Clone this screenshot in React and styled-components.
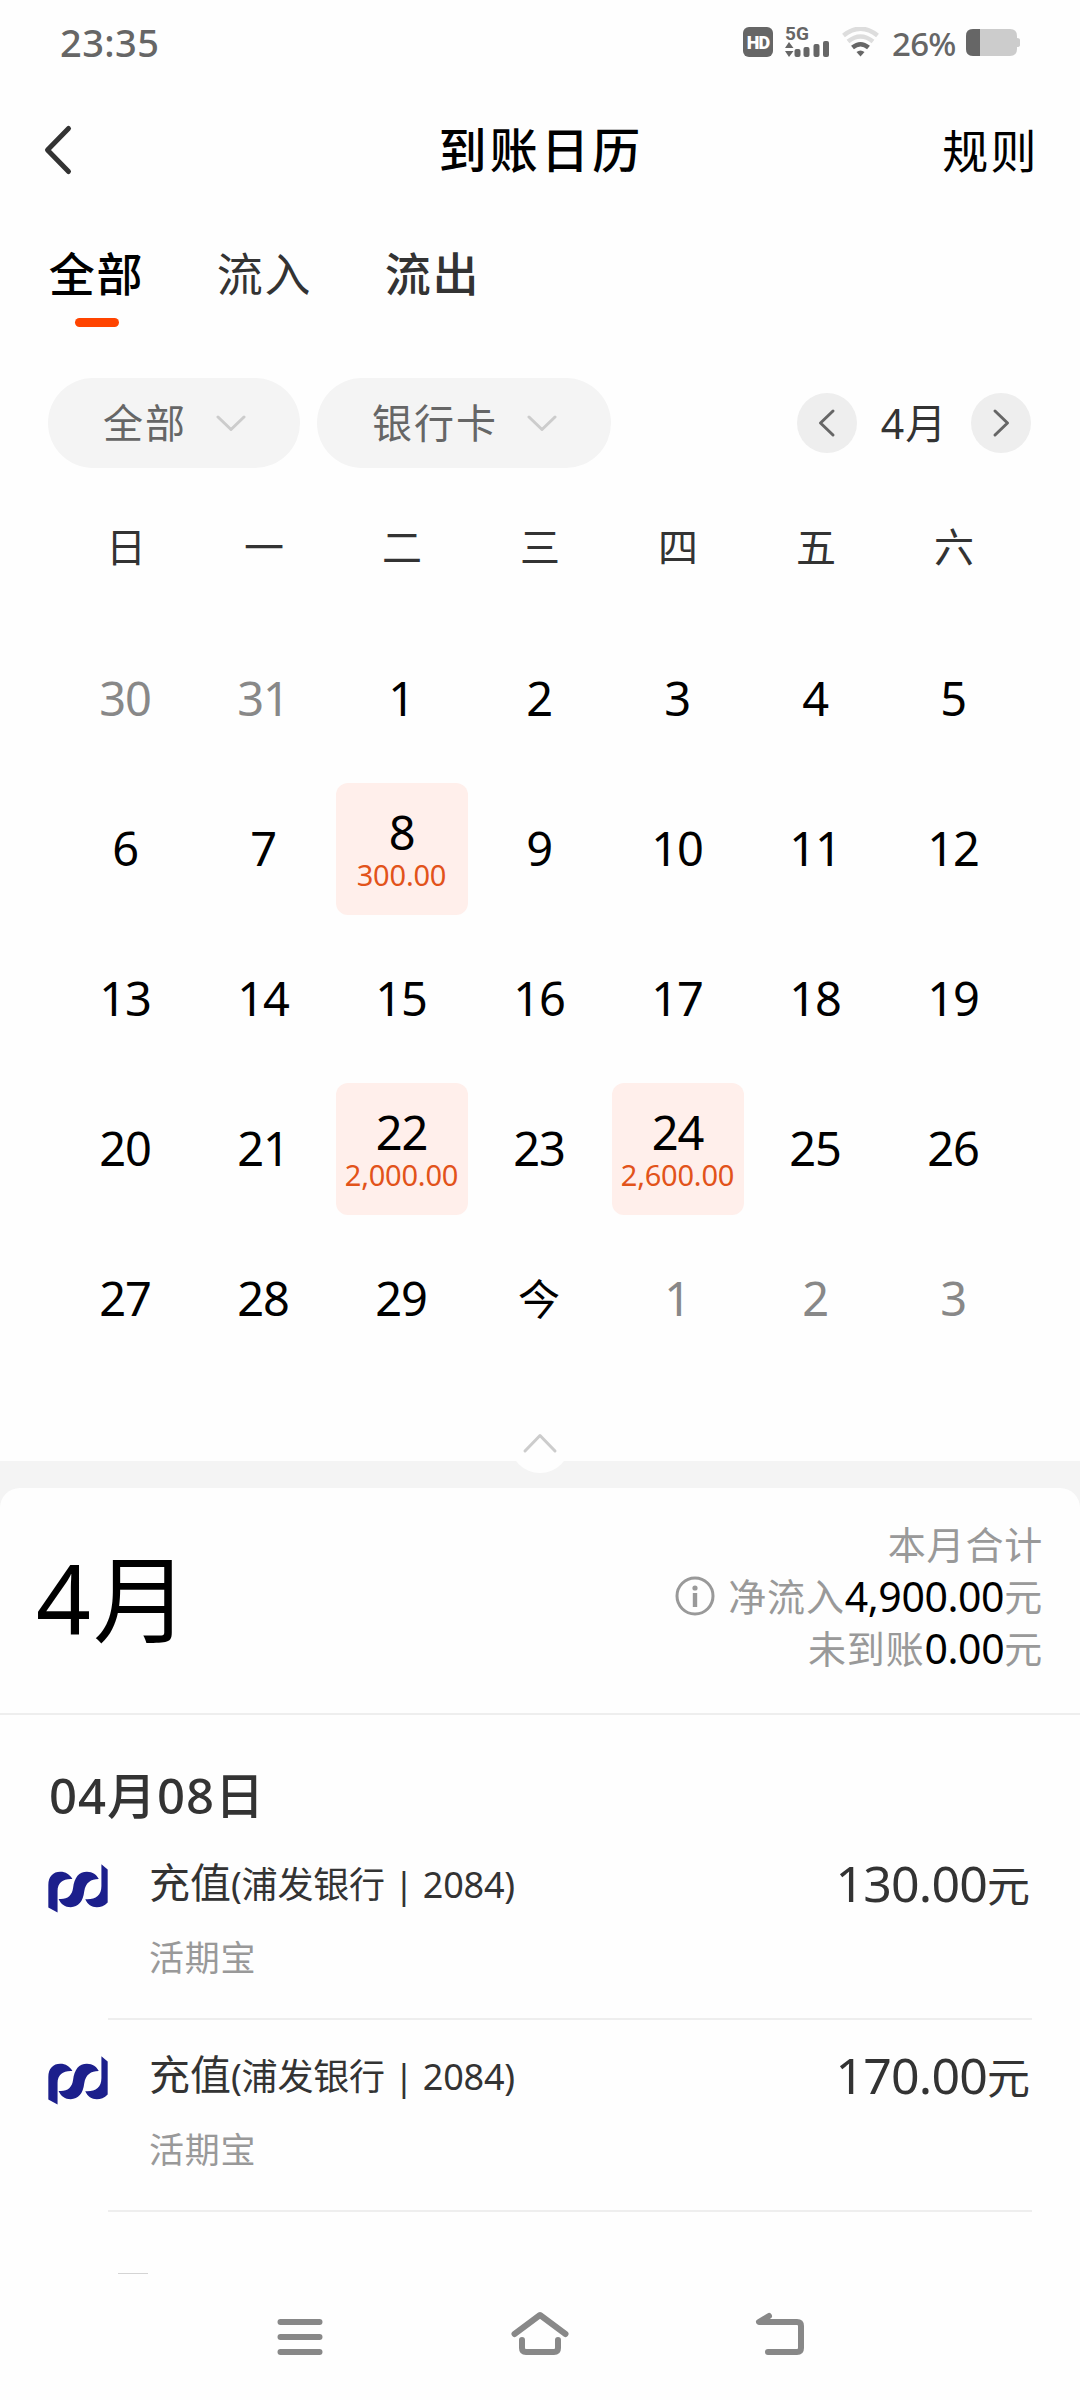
import { useState } from "react";
import styled, { createGlobalStyle } from "styled-components";

const GlobalStyle = createGlobalStyle`
  * {
    box-sizing: border-box;
  }
  body {
    margin: 0;
    background: #fefefe;
    font-family: "Noto Sans", "Noto Sans CJK SC", sans-serif;
    color: #000;
  }
`;

const Page = styled.div`
  display: flex;
  flex-direction: column;
  width: 1080px;
  height: 2400px;
  overflow: hidden;
  background: #fefefe;
  white-space: nowrap;
`;

const StatusBar = styled.div`
  display: flex;
  align-items: center;
  height: 84px;
  padding: 0 60px;
  color: #666;
`;

const Time = styled.div`
  flex: 1;
  font-size: 38px;
  line-height: 82px;
  font-weight: 500;
  letter-spacing: 0.4px;
`;

const HdBadge = styled.div`
  width: 30px;
  height: 30px;
  margin-right: 12px;
  border-radius: 6px;
  background: #666;
  color: #fff;
  font: 900 18px/31px Roboto, sans-serif;
  letter-spacing: -0.8px;
  text-align: center;
`;

const Signal = styled.div`
  display: flex;
  flex-direction: column;
  width: 45px;
  height: 30px;
  margin-right: 12px;
`;

const Network = styled.div`
  height: 14px;
  font: 700 19px/14px Roboto, sans-serif;
`;

const Percent = styled.div`
  margin: 4px 9px 0 13px;
  width: 65px;
  font-size: 33px;
  line-height: 40px;
  font-weight: 500;
  letter-spacing: -0.7px;
`;

const Header = styled.header`
  display: grid;
  grid-template-columns: 1fr auto 1fr;
  align-items: center;
  height: 132px;
  padding: 0 41px 0 43px;
`;

const Title = styled.h1`
  margin: 0;
  font-size: 48px;
  line-height: 60px;
  font-weight: 500;
  letter-spacing: 3.2px;
`;

const Rules = styled.div`
  justify-self: end;
  font-size: 46px;
  line-height: 60px;
  letter-spacing: 2.4px;
`;

const Tabs = styled.nav`
  display: flex;
  gap: 74px;
  height: 162px;
  padding: 27px 0 0 49px;
`;

const Tab = styled.div`
  display: flex;
  flex-direction: column;
  align-items: center;
  width: 94px;
  padding-left: 1px;
  color: ${({ $active }) => ($active ? "#000" : "#333")};
  font-size: 46px;
  line-height: 60px;
  font-weight: ${({ $strong }) => ($strong ? 500 : 400)};
  letter-spacing: 1.8px;
  cursor: pointer;

  &::after {
    content: "";
    width: 44px;
    height: 9px;
    margin-top: 15px;
    border-radius: 5px;
    background: ${({ $active }) => ($active ? "#ff4400" : "transparent")};
  }
`;

const Filters = styled.div`
  display: flex;
  align-items: center;
  height: 90px;
  padding: 0 49px 0 48px;
`;

const Pill = styled.div`
  display: flex;
  align-items: center;
  gap: 29px;
  height: 90px;
  margin-right: 17px;
  padding: 0 54px 0 55px;
  border-radius: 45px;
  background: #f4f4f4;
  color: #666;
  font-size: 40px;
  line-height: 60px;
  letter-spacing: 2px;
`;

const MonthNav = styled.div`
  display: flex;
  align-items: center;
  justify-content: space-between;
  width: 234px;
  margin-left: auto;
  color: #333;
  font-size: 41px;
  line-height: 60px;
  letter-spacing: 1px;
`;

const RoundButton = styled.div`
  display: flex;
  align-items: center;
  justify-content: center;
  width: 60px;
  height: 60px;
  border-radius: 50%;
  background: #eee;
`;

const Week = styled.div`
  display: grid;
  grid-template-columns: repeat(7, 138px);
  justify-content: center;
  height: 156px;
  padding-top: 49px;
  color: #333;
  font-size: 40px;
  line-height: 60px;
  text-align: center;
`;

const Days = styled.div`
  display: grid;
  grid-template-columns: repeat(7, 138px);
  grid-auto-rows: 150px;
  place-content: start center;
  place-items: center;
  height: 837px;
`;

const Day = styled.div`
  display: flex;
  flex-direction: column;
  align-items: center;
  justify-content: center;
  width: 132px;
  height: 132px;
  padding: ${({ $marked }) => ($marked ? "3px 1px 0 0" : "0 2px 1px 0")};
  border-radius: 12px;
  background: ${({ $marked }) => ($marked ? "#ffefeb" : "transparent")};
  color: ${({ $muted }) => ($muted ? "#888" : "#000")};
  font-size: ${({ $today }) => ($today ? 42 : 47)}px;
  line-height: 47px;
  letter-spacing: ${({ $today }) => ($today ? 0 : -1.2)}px;
`;

const Amount = styled.div`
  color: #e2531a;
  font-size: 29px;
  line-height: 37px;
  letter-spacing: -0.2px;
`;

const Band = styled.div`
  display: flex;
  justify-content: center;
  height: 48px;
  margin-bottom: -21px;
  background: #f4f4f4;
`;

const Collapse = styled.div`
  display: flex;
  align-items: center;
  justify-content: center;
  width: 60px;
  height: 60px;
  margin-top: -48px;
  border-radius: 50%;
  background: #fefefe;
`;

const Summary = styled.section`
  display: flex;
  align-items: center;
  justify-content: space-between;
  height: 227px;
  padding: 0 37px 0 36px;
  border-bottom: 2px solid #eee;
  border-radius: 20px 20px 0 0;
  background: #fefefe;
`;

const Month = styled.div`
  font-size: 96px;
  line-height: 120px;
  margin-top: -6px;
  letter-spacing: 2px;
`;

const Totals = styled.div`
  margin-top: -9px;
  color: #999;
  font-size: 38px;
  line-height: 52px;
  letter-spacing: 0.8px;
`;

const TotalLine = styled.div`
  display: flex;
  align-items: center;
  justify-content: flex-end;
  height: 52px;

  svg {
    margin-right: 13px;
  }
  b {
    color: #000;
    font-size: 41px;
    font-weight: 400;
    letter-spacing: -0.4px;
  }
`;

const DateTitle = styled.h2`
  margin: 50px 0 0 49px;
  color: #333;
  font-size: 49px;
  line-height: 60px;
  font-weight: 500;
  letter-spacing: 1px;
`;

const Record = styled.article`
  display: grid;
  grid-template-columns: 60px 43px 1fr auto;
  height: 192px;
  margin: 0 48px;
`;

const LogoCell = styled.div`
  padding-top: 36px;
`;

const RecordBody = styled.div`
  grid-column: 2 / -1;
  display: flex;
  justify-content: space-between;
  padding: 24px 2px 0 41px;
  border-bottom: 2px solid #eee;
`;

const RecordName = styled.div`
  color: #333;
  font-size: 41px;
  line-height: 60px;

  small {
    font-size: 36px;
    letter-spacing: -0.2px;
  }
`;

const Product = styled.div`
  margin-top: 13px;
  color: #999;
  font-size: 35px;
  line-height: 60px;
  letter-spacing: 0.8px;
`;

const Money = styled.div`
  color: #333;
  font-size: 50px;
  line-height: 62px;
  letter-spacing: -0.8px;

  span {
    font-size: 43px;
    letter-spacing: 0;
  }
`;

const Records = styled.div`
  flex: 1;
  margin-top: 3px;
  overflow: hidden;
`;

const NextLogoEdge = styled.div`
  width: 30px;
  height: 1px;
  margin: 61px 0 0 118px;
  background: #d4d4d4;
`;

const SystemNav = styled.footer`
  display: flex;
  justify-content: space-between;
  align-items: center;
  height: 126px;
  padding: 0 270px;
`;

function Chevron({ d, width, height, color, stroke = 3 }) {
  return (
    <svg width={width} height={height} viewBox={`0 0 ${width} ${height}`}>
      <path
        d={d}
        fill="none"
        stroke={color}
        strokeWidth={stroke}
        strokeLinecap="round"
        strokeLinejoin="round"
      />
    </svg>
  );
}

const Down = () => (
  <Chevron width={30} height={18} color="#ccc" d="M2 3L15 15.500L28 3" />
);

function SignalBars() {
  return (
    <svg width="45" height="16" viewBox="0 0 45 16" fill="#666">
      <path d="M4 1L8.500 7H0Z M0 10H8.500L4 16Z" />
      <rect x="9.500" y="8" width="6" height="8" rx="2" />
      <rect x="18.500" y="6" width="6" height="10" rx="2" />
      <rect x="28.500" y="3" width="6" height="13" rx="2" />
      <rect x="38" y="0" width="6" height="16" rx="2" />
    </svg>
  );
}

function Wifi() {
  return (
    <svg width="37" height="30" viewBox="0 0 37 30" fill="none">
      <path d="M1.500 8.500Q18.500 -5 35.500 8.500" stroke="#ddd" strokeWidth="4.500" />
      <path d="M6 14.500Q18.500 4.500 31 14.500" stroke="#ddd" strokeWidth="4.500" />
      <path d="M10.500 20.500Q18.500 14 26.500 20.500" stroke="#666" strokeWidth="4.500" />
      <path d="M14.500 25Q18.500 22 22.500 25L18.500 29.500Z" fill="#666" />
    </svg>
  );
}

function Battery() {
  return (
    <svg width="54" height="27" viewBox="0 0 54 27">
      <path
        d="M7 0H44Q51 0 51 7V9Q54 9 54 11V16Q54 18 51 18V20Q51 27 44 27H7Q0 27 0 20V7Q0 0 7 0Z"
        fill="#ccc"
      />
      <path d="M7 0H14V27H7Q0 27 0 20V7Q0 0 7 0Z" fill="#666" />
    </svg>
  );
}

function BankLogo() {
  return (
    <svg width="60" height="49" viewBox="54 76 182 147" fill="#1c1f8c">
      <path d="M55 207V139C55 113 70 99 91 99C108 99 120 107 128 121C101 119 83 132 83 157V222Z" />
      <path d="M172 99C190 99 201 108 208 121C184 121 168 132 164 158C160 190 146 206 123 206C106 206 93 197 86 181C111 184 127 172 130 148C134 116 148 99 172 99Z" />
      <path d="M216 76L235 92V192C225 203 214 206 202 206C186 206 174 198 167 182C197 184 216 172 216 142Z" />
    </svg>
  );
}

function Info() {
  return (
    <svg width="40" height="40" viewBox="0 0 40 40" fill="#999">
      <circle cx="20" cy="20" r="18" fill="none" stroke="#999" strokeWidth="3" />
      <circle cx="20" cy="12" r="2.600" />
      <rect x="17.800" y="17" width="4.400" height="14" />
    </svg>
  );
}

const NavIcon = styled.svg.attrs({
  width: 60,
  height: 60,
  fill: "none",
  stroke: "#888",
  strokeWidth: 6,
  strokeLinecap: "round",
  strokeLinejoin: "round",
})``;

const week = ["日", "一", "二", "三", "四", "五", "六"];

const amounts = { 8: "300.00", 22: "2,000.00", 24: "2,600.00" };

const days = [
  { label: "30", muted: true },
  { label: "31", muted: true },
  ...Array.from({ length: 29 }, (_, i) => ({
    label: String(i + 1),
    amount: amounts[i + 1],
  })),
  { label: "今", today: true },
  { label: "1", muted: true },
  { label: "2", muted: true },
  { label: "3", muted: true },
];

const tabs = [
  { label: "全部", strong: true },
  { label: "流入", strong: false },
  { label: "流出", strong: true },
];

const records = [
  { id: 1, amount: "130.00" },
  { id: 2, amount: "170.00" },
];

export default function App() {
  const [tab, setTab] = useState("全部");

  return (
    <Page>
      <GlobalStyle />
      <StatusBar>
        <Time>23:35</Time>
        <HdBadge>HD</HdBadge>
        <Signal>
          <Network>5G</Network>
          <SignalBars />
        </Signal>
        <Wifi />
        <Percent>26%</Percent>
        <Battery />
      </StatusBar>
      <Header>
        <Chevron
          width={30}
          height={54}
          color="#333"
          stroke={5}
          d="M25.500 5.500L4.500 27L25.500 48.500"
        />
        <Title>到账日历</Title>
        <Rules>规则</Rules>
      </Header>
      <Tabs>
        {tabs.map(({ label, strong }) => (
          <Tab
            key={label}
            $active={tab === label}
            $strong={strong}
            onClick={() => setTab(label)}
          >
            {label}
          </Tab>
        ))}
      </Tabs>
      <Filters>
        <Pill>
          全部
          <Down />
        </Pill>
        <Pill>
          银行卡
          <Down />
        </Pill>
        <MonthNav>
          <RoundButton>
            <Chevron width={18} height={30} color="#666" d="M15 3L2.500 15L15 27" />
          </RoundButton>
          4月
          <RoundButton>
            <Chevron width={18} height={30} color="#666" d="M3 3L15.500 15L3 27" />
          </RoundButton>
        </MonthNav>
      </Filters>
      <Week>
        {week.map((name) => (
          <div key={name}>{name}</div>
        ))}
      </Week>
      <Days>
        {days.map((day, i) => (
          <Day
            key={i}
            $marked={Boolean(day.amount)}
            $muted={day.muted}
            $today={day.today}
          >
            {day.label}
            {day.amount && <Amount>{day.amount}</Amount>}
          </Day>
        ))}
      </Days>
      <div>
        <Band>
          <Collapse>
            <Chevron width={36} height={22} color="#ccc" d="M3 19L18 3.500L33 19" />
          </Collapse>
        </Band>
        <Summary>
          <Month>4月</Month>
          <Totals>
            <TotalLine>本月合计</TotalLine>
            <TotalLine>
              <Info />
              净流入<b>4,900.00</b>元
            </TotalLine>
            <TotalLine>
              未到账<b>0.00</b>元
            </TotalLine>
          </Totals>
        </Summary>
      </div>
      <DateTitle>04月08日</DateTitle>
      <Records>
        {records.map((record) => (
          <Record key={record.id}>
            <LogoCell>
              <BankLogo />
            </LogoCell>
            <RecordBody>
              <div>
                <RecordName>
                  充值<small>(浦发银行 | 2084)</small>
                </RecordName>
                <Product>活期宝</Product>
              </div>
              <Money>
                {record.amount}
                <span>元</span>
              </Money>
            </RecordBody>
          </Record>
        ))}
        <NextLogoEdge />
      </Records>
      <SystemNav>
        <NavIcon viewBox="270 2307 60 60">
          <path d="M280.500 2322H319.500M280.500 2337H319.500M280.500 2352H319.500" />
        </NavIcon>
        <NavIcon viewBox="510 2307 60 60">
          <path d="M514.500 2334L540 2315L565.500 2334" />
          <path d="M522 2340V2348Q522 2352 526 2352H554Q558 2352 558 2348V2340" />
        </NavIcon>
        <NavIcon viewBox="750 2307 60 60">
          <path d="M769 2316L759 2322H797Q801 2322 801 2326V2348Q801 2352 797 2352H768" />
        </NavIcon>
      </SystemNav>
    </Page>
  );
}
